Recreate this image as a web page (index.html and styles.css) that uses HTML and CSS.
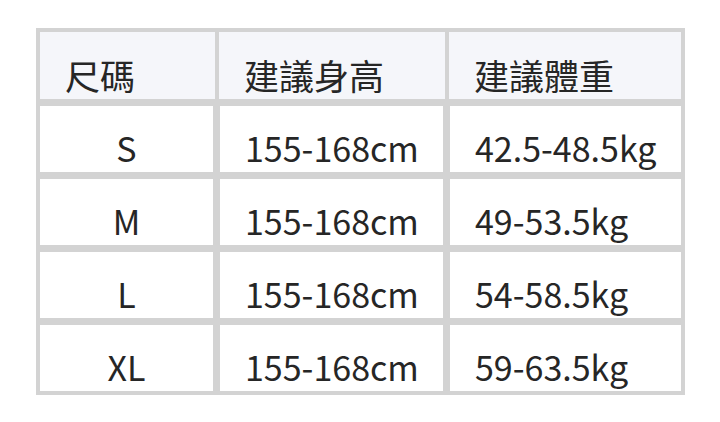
FILE: index.html
```html
<!DOCTYPE html>
<html lang="zh-Hant">
<head>
<meta charset="utf-8">
<link rel="stylesheet" href="styles.css">
</head>
<body>
<div class="table">
  <div class="row head">
    <div class="cell first">尺碼</div>
    <div class="cell">建議身高</div>
    <div class="cell">建議體重</div>
  </div>
  <div class="row body">
    <div class="cell center">S</div>
    <div class="cell">155-168cm</div>
    <div class="cell">42.5-48.5kg</div>
  </div>
  <div class="row body">
    <div class="cell center">M</div>
    <div class="cell">155-168cm</div>
    <div class="cell">49-53.5kg</div>
  </div>
  <div class="row body">
    <div class="cell center">L</div>
    <div class="cell">155-168cm</div>
    <div class="cell">54-58.5kg</div>
  </div>
  <div class="row body">
    <div class="cell center">XL</div>
    <div class="cell">155-168cm</div>
    <div class="cell">59-63.5kg</div>
  </div>
</div>
</body>
</html>
```
FILE: styles.css
```css
html, body {
  margin: 0;
  padding: 0;
  background: #ffffff;
}
body {
  width: 720px;
  height: 422px;
  padding: 28px 0 0 36px;
  box-sizing: border-box;
  font-family: "Noto Sans CJK TC", "Noto Sans", sans-serif;
  color: #262626;
}
.table {
  width: 649px;
  box-sizing: border-box;
  background: #d3d3d3;
  padding: 4px;
  display: flex;
  flex-direction: column;
  gap: 7px;
}
.row {
  display: grid;
}
.head {
  grid-template-columns: 175px 226px 232px;
  column-gap: 4px;
  height: 67px;
}
.body {
  grid-template-columns: 173px 223px 231px;
  column-gap: 7px;
  height: 66px;
}
.cell {
  display: flex;
  align-items: flex-end;
  padding-left: 25px;
  font-size: 34px;
  line-height: normal;
  white-space: nowrap;
}
.head .cell {
  background: #f5f6fa;
  font-size: 35px;
  line-height: 49px;
}
.body .cell {
  background: #ffffff;
}
.cell.center {
  justify-content: center;
  padding-left: 0;
}
```
